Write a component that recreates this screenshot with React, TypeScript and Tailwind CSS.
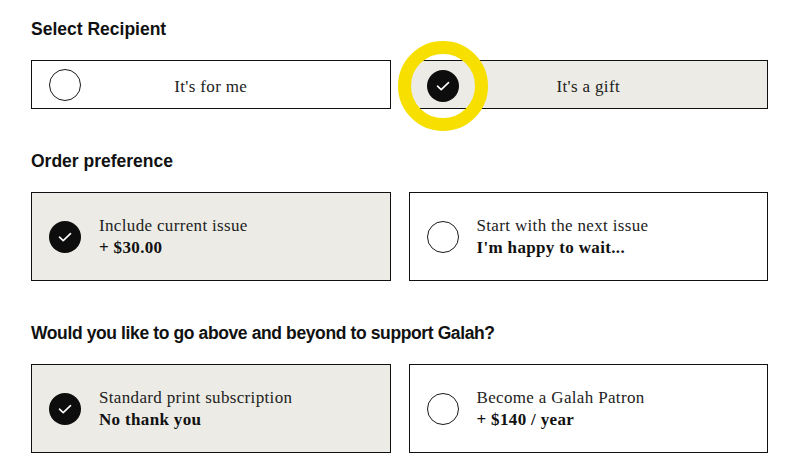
import React from "react";

const Check = () => (
  <span className="flex h-8 w-8 shrink-0 items-center justify-center rounded-full bg-[#0d0d0d]">
    <svg width="14" height="10" viewBox="0 0 14 10" fill="none">
      <path d="M1.5 5.2 L5.2 8.6 L12.5 1.6" stroke="#fff" strokeWidth="1.6" strokeLinecap="round" strokeLinejoin="round" />
    </svg>
  </span>
);

const Empty = () => (
  <span className="block h-8 w-8 shrink-0 rounded-full border-[1.5px] border-[#1a1a1a] bg-white" />
);

const serif = "font-['Liberation_Serif','Times_New_Roman',serif]";
const sans = "font-['Liberation_Sans',Arial,sans-serif]";

function Heading({ children, tight }: { children: React.ReactNode; tight?: boolean }) {
  return (
    <h2
      className={`${sans} mb-[19px] h-6 text-[17.5px] font-bold leading-6 text-[#111] ${
        tight ? "tracking-[-0.022em]" : ""
      }`}
    >
      {children}
    </h2>
  );
}

function Option({
  selected,
  title,
  sub,
}: {
  selected: boolean;
  title: string;
  sub: string;
}) {
  return (
    <div
      className={`flex h-[89px] items-center border border-[#111] pl-[17px] ${
        selected ? "bg-[#ecebe5]" : "bg-white"
      }`}
    >
      {selected ? <Check /> : <Empty />}
      <div className={`${serif} ml-[18px] pt-[1px] text-[17px] leading-[22px] tracking-[0.02em] text-[#222]`}>
        <div>{title}</div>
        <div className="font-bold text-[#111]">{sub}</div>
      </div>
    </div>
  );
}

export default function App() {
  return (
    <div className="min-h-[474px] w-[794px] bg-white px-[31px] pt-[17px]">
      <Heading>Select Recipient</Heading>
      <div className="grid w-[737px] grid-cols-2 gap-[18px]">
        <div className="relative flex h-[49px] items-center border border-[#111] bg-white pl-[17px]">
          <Empty />
          <span className={`${serif} absolute inset-0 flex items-center justify-center pt-[4px] text-[17px] tracking-[0.02em] text-[#222]`}>
            It's for me
          </span>
        </div>
        <div className="relative flex h-[49px] items-center border border-[#111] bg-[#ecebe5] pl-[17px]">
          <span className={`${serif} absolute inset-0 flex items-center justify-center pt-[4px] text-[17px] tracking-[0.02em] text-[#222]`}>
            It's a gift
          </span>
          <span className="relative z-10 pt-[2px]">
            <Check />
          </span>
          <span className="pointer-events-none absolute left-[-12px] top-[-20px] z-20 h-[90px] w-[90px] rounded-full border-[13.5px] border-[#f7df00]" />
        </div>
      </div>

      <div className="mt-[40px]">
        <Heading>Order preference</Heading>
        <div className="grid w-[737px] grid-cols-2 gap-[18px]">
          <Option selected title="Include current issue" sub="+ $30.00" />
          <Option selected={false} title="Start with the next issue" sub="I'm happy to wait..." />
        </div>
      </div>

      <div className="mt-[40px]">
        <Heading tight>Would you like to go above and beyond to support Galah?</Heading>
        <div className="grid w-[737px] grid-cols-2 gap-[18px]">
          <Option selected title="Standard print subscription" sub="No thank you" />
          <Option selected={false} title="Become a Galah Patron" sub="+ $140 / year" />
        </div>
      </div>
    </div>
  );
}
